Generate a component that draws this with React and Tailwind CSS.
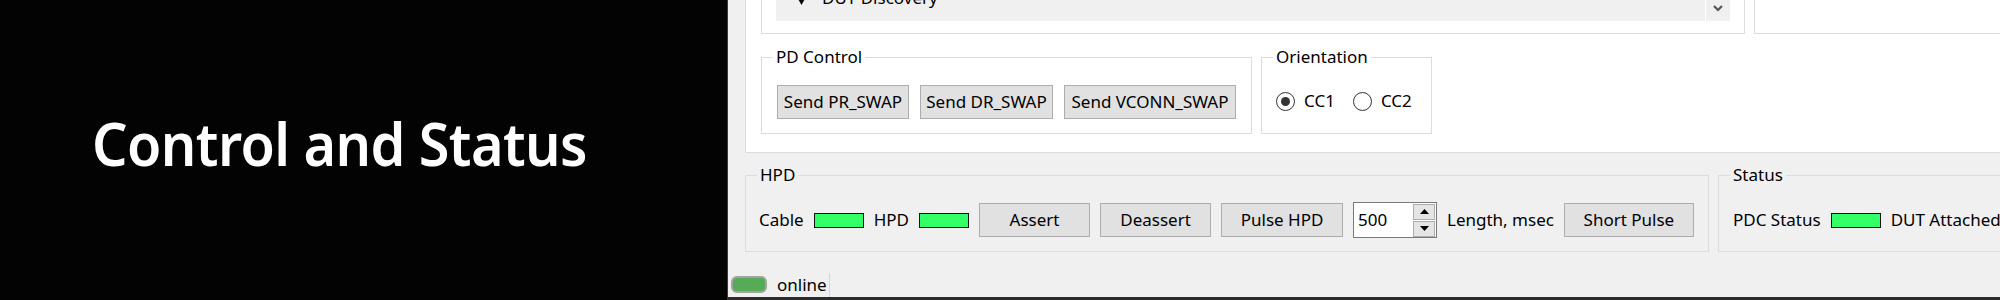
import React from "react";

function Btn({ w, children }) {
  return (
    <button
      className={`h-[34px] shrink-0 bg-[#e1e1e1] border border-[#adadad] text-[17px] leading-[20px] text-black ${w}`}
    >
      {children}
    </button>
  );
}

function Led() {
  return <div className="w-[50px] h-[15px] shrink-0 bg-[#33ff66] border border-[#111]" />;
}

function Radio({ checked }) {
  return (
    <div className="w-[19px] h-[19px] shrink-0 rounded-full border border-[#333] bg-white flex items-center justify-center">
      {checked && <div className="w-[9px] h-[9px] rounded-full bg-[#333]" />}
    </div>
  );
}

function Legend({ children }) {
  return <legend className="ml-[11px] px-[3px] text-[17px] leading-[20px]">{children}</legend>;
}

export default function App() {
  return (
    <div className="flex w-[2000px] h-[300px] overflow-hidden font-['Noto_Sans',sans-serif] text-black">
      <div className="w-[727px] shrink-0 bg-[#030303] pt-[103px] pl-[92px]">
        <div className="text-white text-[59px] leading-[80px] font-semibold tracking-[-0.6px] scale-x-[0.945] origin-left whitespace-nowrap">
          Control and Status
        </div>
      </div>
      <div className="flex-1 min-w-0 overflow-hidden flex flex-col bg-[#f0f0f0] border-l border-[#3c3c3c] border-b-[3px] border-b-[#2b2b2b]">
        {/* tab page */}
        <div className="ml-[17px] h-[153px] shrink-0 bg-white border-l border-b border-[#dcdcdc] pl-[15px] flex flex-col">
          <div className="flex h-[34px] gap-[9px] shrink-0">
            <div className="w-[984px] shrink-0 border-x border-b border-[#dcdcdc] pl-[14px]">
              <div className="flex h-[21px] w-[954px] overflow-hidden">
                <div className="w-[929px] bg-[#f0f0f0] pl-[21px]">
                  <div className="flex items-start gap-[16px] -mt-[12px] h-[20px]">
                    <svg width="9" height="8" viewBox="0 0 9 8" className="mt-[9px] shrink-0">
                      <polygon points="0,0 9,0 4.5,8" fill="#000" />
                    </svg>
                    <span className="text-[17px] leading-[20px] whitespace-nowrap">DUT Discovery</span>
                  </div>
                </div>
                <div className="w-px bg-white" />
                <div className="w-[24px] bg-[#f0f0f0] pl-[7px] pt-[5px]">
                  <svg width="10" height="7" viewBox="0 0 10 7">
                    <polyline points="1,1 5,5 9,1" fill="none" stroke="#555" strokeWidth="2.2" />
                  </svg>
                </div>
              </div>
            </div>
            <div className="flex-1 border-l border-b border-[#dcdcdc]" />
          </div>

          <div className="flex gap-[9px] mt-[13px]">
            <fieldset className="w-[491px] h-[87px] shrink-0 border border-[#dcdcdc]">
              <Legend>PD Control</Legend>
              <div className="mt-[18px] pl-[15px] flex gap-[11px]">
                <Btn w="w-[132px]">Send PR_SWAP</Btn>
                <Btn w="w-[133px]">Send DR_SWAP</Btn>
                <Btn w="w-[172px]">Send VCONN_SWAP</Btn>
              </div>
            </fieldset>
            <fieldset className="w-[171px] h-[87px] shrink-0 border border-[#dcdcdc]">
              <Legend>Orientation</Legend>
              <div className="mt-[17px] h-[34px] pl-[14px] flex items-center text-[17px] leading-[20px]">
                <Radio checked />
                <span className="ml-[9px]">CC1</span>
                <div className="ml-[18px]">
                  <Radio />
                </div>
                <span className="ml-[9px]">CC2</span>
              </div>
            </fieldset>
          </div>
        </div>

        {/* HPD + Status row */}
        <div className="flex gap-[9px] mt-[12px] ml-[17px] shrink-0">
          <fieldset className="w-[964px] h-[87px] shrink-0 border border-[#dcdcdc]">
            <Legend>HPD</Legend>
            <div className="mt-[17px] h-[36px] pl-[13px] flex items-center gap-[10px] text-[17px] leading-[20px] whitespace-nowrap">
              <span>Cable</span>
              <Led />
              <span>HPD</span>
              <Led />
              <Btn w="w-[111px]">Assert</Btn>
              <Btn w="w-[111px]">Deassert</Btn>
              <Btn w="w-[122px]">Pulse HPD</Btn>
              <div className="w-[84px] h-[36px] shrink-0 bg-white border border-[#7a7a7a] flex items-center justify-between pl-[4px] pr-px">
                <span>500</span>
                <div className="flex flex-col gap-px">
                  <div className="w-[22px] h-[16px] bg-[#e5e5e5] border border-[#adadad] flex items-center justify-center">
                    <svg width="9" height="5" viewBox="0 0 9 5">
                      <polygon points="0,5 9,5 4.5,0" fill="#000" />
                    </svg>
                  </div>
                  <div className="w-[22px] h-[16px] bg-[#e5e5e5] border border-[#adadad] flex items-center justify-center">
                    <svg width="9" height="5" viewBox="0 0 9 5">
                      <polygon points="0,0 9,0 4.5,5" fill="#000" />
                    </svg>
                  </div>
                </div>
              </div>
              <span>Length, msec</span>
              <Btn w="w-[130px]">Short Pulse</Btn>
            </div>
          </fieldset>
          <fieldset className="w-[340px] h-[87px] shrink-0 border border-[#dcdcdc]">
            <Legend>Status</Legend>
            <div className="mt-[17px] h-[36px] pl-[14px] flex items-center gap-[10px] text-[17px] leading-[20px] whitespace-nowrap">
              <span>PDC Status</span>
              <Led />
              <span>DUT Attached</span>
            </div>
          </fieldset>
        </div>

        {/* status bar */}
        <div className="flex mt-[21px] h-[24px] ml-[3px] shrink-0">
          <div className="mt-[3px] w-[36px] h-[17px] rounded-[6px] border-2 border-[#a3a3a3] bg-[#56ab56]" />
          <span className="ml-[10px] mt-[2px] text-[17px] leading-[20px]">online</span>
          <div className="ml-[2px] w-px bg-[#d5d5d5]" />
        </div>
      </div>
    </div>
  );
}
